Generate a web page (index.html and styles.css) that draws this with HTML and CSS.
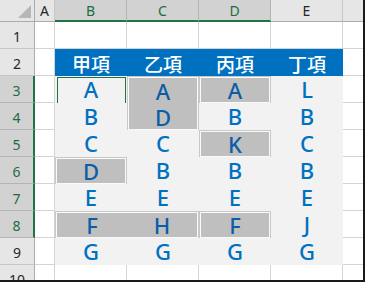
FILE: index.html
```html
<!DOCTYPE html>
<html lang="zh-Hant">
<head>
    <meta charset="UTF-8">
    <title>Sheet</title>
    <link rel="stylesheet" href="styles.css">
</head>
<body>
    <div class="frame">
        <div class="sheet">
            <!-- column headers -->
            <div class="corner"><span class="tri"></span></div>
            <div class="ch">A</div>
            <div class="ch sel">B</div>
            <div class="ch sel">C</div>
            <div class="ch sel">D</div>
            <div class="ch">E</div>
            <div class="ch"></div>

            <!-- row 1 -->
            <div class="rh">1</div>
            <div class="c"></div><div class="c"></div><div class="c"></div><div class="c"></div><div class="c"></div><div class="c"></div>

            <!-- row 2 -->
            <div class="rh">2</div>
            <div class="c"></div>
            <div class="head">甲項</div>
            <div class="head">乙項</div>
            <div class="head">丙項</div>
            <div class="head">丁項</div>
            <div class="c"></div>

            <!-- row 3 -->
            <div class="rh sel">3</div>
            <div class="c"></div>
            <div class="d cur">A</div>
            <div class="d g tall"><span>A</span><span>D</span></div>
            <div class="d g">A</div>
            <div class="d">L</div>
            <div class="c"></div>

            <!-- row 4 -->
            <div class="rh sel">4</div>
            <div class="c"></div>
            <div class="d">B</div>
            <div class="d">B</div>
            <div class="d">B</div>
            <div class="c"></div>

            <!-- row 5 -->
            <div class="rh sel">5</div>
            <div class="c"></div>
            <div class="d">C</div>
            <div class="d">C</div>
            <div class="d g">K</div>
            <div class="d">C</div>
            <div class="c"></div>

            <!-- row 6 -->
            <div class="rh sel">6</div>
            <div class="c"></div>
            <div class="d g">D</div>
            <div class="d">B</div>
            <div class="d">B</div>
            <div class="d">B</div>
            <div class="c"></div>

            <!-- row 7 -->
            <div class="rh sel">7</div>
            <div class="c"></div>
            <div class="d">E</div>
            <div class="d">E</div>
            <div class="d">E</div>
            <div class="d">E</div>
            <div class="c"></div>

            <!-- row 8 -->
            <div class="rh sel">8</div>
            <div class="c"></div>
            <div class="d g wide"><span>F</span><span>H</span></div>
            <div class="d g">F</div>
            <div class="d">J</div>
            <div class="c"></div>

            <!-- row 9 -->
            <div class="rh">9</div>
            <div class="c"></div>
            <div class="d">G</div>
            <div class="d">G</div>
            <div class="d">G</div>
            <div class="d">G</div>
            <div class="c"></div>

            <!-- row 10 -->
            <div class="rh">10</div>
            <div class="c"></div><div class="c"></div><div class="c"></div><div class="c"></div><div class="c"></div><div class="c"></div>
        </div>
    </div>
</body>
</html>
```

FILE: styles.css
```css
body {
    margin: 0;
    background: #ffffff;
    overflow: hidden;
}

.frame {
    width: 363px;
    height: 280px;
    border-right: 2px solid #1a1a1a;
    border-bottom: 2px solid #1a1a1a;
    overflow: hidden;
}

.sheet {
    display: grid;
    grid-template-columns: 35px 20px repeat(4, 72px) 22px;
    grid-template-rows: 22px repeat(10, 27px);
    font-family: "Noto Sans", "Noto Sans CJK TC", sans-serif;
}

.sheet > div {
    box-sizing: border-box;
}

.corner {
    background: #e6e6e6;
    border-right: 1px solid #ababab;
    border-bottom: 1px solid #ababab;
    position: relative;
}

.tri {
    position: absolute;
    right: 3px;
    bottom: 3px;
    width: 0;
    height: 0;
    border-left: 13px solid transparent;
    border-bottom: 13px solid #b7b7b7;
}

.ch {
    background: #e6e6e6;
    border-right: 1px solid #c6c6c6;
    border-bottom: 1px solid #ababab;
    color: #262626;
    font-size: 14px;
    display: flex;
    justify-content: center;
    align-items: center;
}

.ch.sel {
    background: #d2d2d2;
    color: #1e6b43;
    border-right-color: #b4b4b4;
    border-bottom: 2px solid #217346;
}

.rh {
    background: #e6e6e6;
    border-right: 1px solid #ababab;
    border-bottom: 1px solid #c6c6c6;
    color: #262626;
    font-size: 14px;
    display: flex;
    justify-content: center;
    align-items: flex-end;
    padding-bottom: 2px;
}

.rh.sel {
    background: #d2d2d2;
    color: #1e6b43;
    border-right: 2px solid #217346;
    border-bottom-color: #b4b4b4;
}

.c {
    background: #ffffff;
    border-right: 1px solid #d4d4d4;
    border-bottom: 1px solid #d4d4d4;
}

.head {
    background: #0070c0;
    color: #ffffff;
    font-family: "Noto Sans CJK TC", sans-serif;
    font-size: 19px;
    font-weight: 500;
    display: flex;
    justify-content: center;
    align-items: center;
    padding-top: 1px;
}

.d {
    background: #f2f2f2;
    color: #0070c0;
    font-size: 22px;
    font-weight: 500;
    line-height: 27px;
    text-align: center;
    position: relative;
}

.d.g {
    background: #bfbfbf;
    color: #0c5da6;
    border: 1px solid #fafafa;
    box-shadow: 0 0 0 1px #c8c8c8;
    line-height: 25px;
    margin: 1px 1px 0 1px;
}

.d.tall {
    grid-row: span 2;
    display: flex;
    flex-direction: column;
}

.d.tall span {
    height: 26px;
    line-height: 26px;
}

.d.wide {
    grid-column: span 2;
    display: flex;
}

.d.wide span {
    flex: 1;
}

.d.cur::after {
    content: "";
    position: absolute;
    left: 2px;
    top: 1px;
    right: 1px;
    bottom: -1px;
    border: 1px solid #217346;
}
```
